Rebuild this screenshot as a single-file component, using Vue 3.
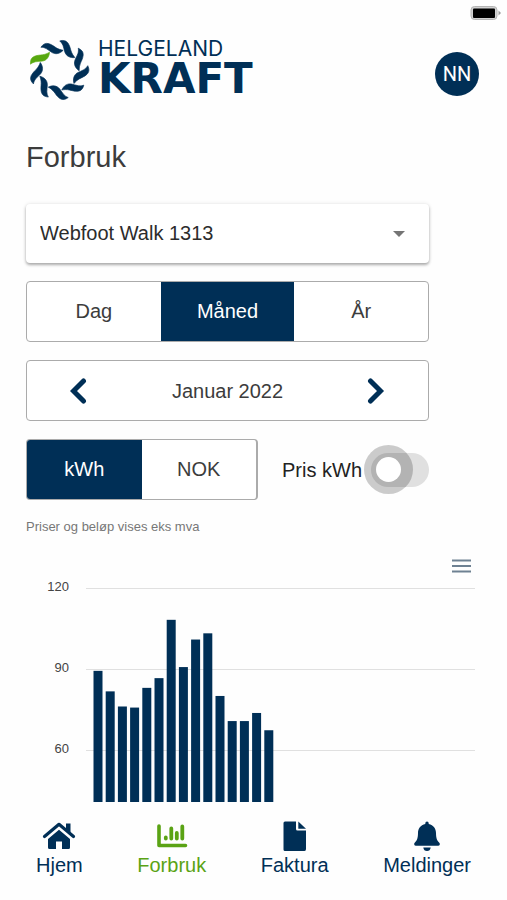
<script setup>
import { ref } from 'vue'

const periods = ['Dag', 'Måned', 'År']
const period = ref('Måned')
const units = ['kWh', 'NOK']
const unit = ref('kWh')
const showPrice = ref(false)
const meter = ref('Webfoot Walk 1313')

const petals = Array.from({ length: 9 }, (_, i) => i * 40)

const usage = [89.5, 81.9, 76.3, 75.9, 83.2, 86.8, 108.4, 90.9, 101.1, 103.4, 80.2, 70.9, 70.9, 73.9, 67.5]
const ticks = [120, 90, 60]
const chartHeight = 227
const y = (value) => 13.5 + (120 - value) * 2.7
const bars = usage.map((value, i) => ({
  x: 67.5 + i * 12.2,
  y: y(value),
  height: chartHeight - y(value),
}))
</script>

<template>
  <div class="page">
    <div class="status">
      <svg width="31" height="16" viewBox="0 0 31 16" aria-hidden="true">
        <rect x="1" y="1.500" width="26" height="13" rx="3.5" fill="#d2d2d2" stroke="#b4b4b4" />
        <rect x="3" y="3.500" width="22" height="9.500" rx="1" fill="#000" />
        <path d="M28.500 5.500 L31 8 L28.500 10.500Z" fill="#999" />
      </svg>
    </div>

    <header class="header">
      <a class="brand" href="#">
        <svg class="mark" width="62" height="62" viewBox="-31 -31 62 62" aria-hidden="true">
          <path
            v-for="angle in petals"
            :key="angle"
            :class="angle === 0 ? 'petal-green' : 'petal'"
            :transform="`rotate(${angle})`"
            d="M-28.500 -5.800 C-28.800 -9.500 -28 -12 -25 -13.500 C-21.500 -15 -19 -14.800 -16.500 -15.200 C-14 -15.600 -12 -16.300 -9.500 -17.800 C-9.700 -13 -12.500 -9.600 -16.500 -8.900 C-19 -8.500 -21 -8.700 -23.500 -8.200 C-25.500 -7.800 -27 -7 -28.500 -5.800Z"
          />
        </svg>
        <span class="brand-text">
          <span class="brand-top">HELGELAND</span>
          <span class="brand-bottom">KRAFT</span>
        </span>
      </a>
      <button class="avatar" type="button">NN</button>
    </header>

    <main class="main">
      <h1 class="title">Forbruk</h1>

      <div class="controls">
        <div class="select-wrap">
          <select v-model="meter" class="select" aria-label="Målepunkt">
            <option>Webfoot Walk 1313</option>
          </select>
          <svg class="caret" width="12" height="6" viewBox="0 0 12 6" aria-hidden="true">
            <path d="M0 0H12L6 6Z" fill="#757575" />
          </svg>
        </div>

        <div class="segments">
          <button
            v-for="item in periods"
            :key="item"
            type="button"
            class="segment"
            :class="{ active: item === period }"
            @click="period = item"
          >{{ item }}</button>
        </div>

        <div class="date">
          <button class="arrow" type="button" aria-label="Forrige">
            <svg width="18" height="26" viewBox="0 0 18 26"><path d="M13.500 3 L3.500 13 L13.500 23" /></svg>
          </button>
          <span>Januar 2022</span>
          <button class="arrow" type="button" aria-label="Neste">
            <svg width="18" height="26" viewBox="0 0 18 26"><path d="M3.500 3 L13.500 13 L3.500 23" /></svg>
          </button>
        </div>

        <div class="unit-row">
          <div class="segments units">
            <button
              v-for="item in units"
              :key="item"
              type="button"
              class="segment"
              :class="{ active: item === unit }"
              @click="unit = item"
            >{{ item }}</button>
          </div>
          <label class="switch-label" for="price">Pris kWh</label>
          <input id="price" v-model="showPrice" class="switch" type="checkbox" />
        </div>
      </div>

      <p class="note">Priser og beløp vises eks mva</p>

      <div class="chart-tools">
        <button class="menu" type="button" aria-label="Meny">
          <svg width="19" height="14" viewBox="0 0 19 14">
            <path d="M0 1.500H19M0 7H19M0 12.500H19" stroke="#6e8192" stroke-width="2" />
          </svg>
        </button>
      </div>

      <svg class="chart" :viewBox="`0 0 449 ${chartHeight}`">
        <g v-for="tick in ticks" :key="tick">
          <line x1="60" x2="449" :y1="y(tick)" :y2="y(tick)" class="grid" />
          <text x="43" :y="y(tick) + 2" class="tick">{{ tick }}</text>
        </g>
        <rect
          v-for="(bar, i) in bars"
          :key="i"
          class="bar"
          :x="bar.x"
          :y="bar.y"
          width="9"
          :height="bar.height"
        />
      </svg>
    </main>

    <nav class="nav">
      <a class="nav-item" href="#">
        <svg width="34" height="30" viewBox="0 0 34 30">
          <path d="M2.500 15.500 L17 3.300 L31.500 15.500" fill="none" stroke="currentColor" stroke-width="3.200" stroke-linecap="round" stroke-linejoin="round" />
          <path d="M24 2.500 H28.500 V13 L24 9.200Z" fill="currentColor" />
          <path d="M17 8.700 L28 18 V26.500 Q28 28 26.500 28 H20 V20.500 H14 V28 H7.500 Q6 28 6 26.500 V18Z" fill="currentColor" />
        </svg>
        <span>Hjem</span>
      </a>
      <a class="nav-item current" href="#">
        <svg width="34" height="30" viewBox="0 0 34 30" fill="none" stroke="currentColor" stroke-linecap="round" stroke-linejoin="round">
          <path d="M4 5 V24.500 H30.500" stroke-width="3.600" />
          <path d="M10.800 16.500 V17.500 M16.300 7.500 V17.500 M21.800 12 V17.500 M27.300 5.500 V17.500" stroke-width="3.800" />
        </svg>
        <span>Forbruk</span>
      </a>
      <a class="nav-item" href="#">
        <svg width="34" height="30" viewBox="0 0 34 30" fill="currentColor">
          <path d="M7 0.500 H18 V8 Q18 9.500 19.500 9.500 H28 V28 Q28 30 26.500 30 H7 Q5.500 30 5.500 28.500 V2 Q5.500 0.500 7 0.500Z" />
          <path d="M20.300 0.500 L28 7.700 H20.300Z" />
        </svg>
        <span>Faktura</span>
      </a>
      <a class="nav-item" href="#">
        <svg width="34" height="30" viewBox="0 0 34 30" fill="currentColor">
          <path d="M17 0.500 Q18.700 0.500 18.700 2.200 V3 C23.500 4 26 7.800 26 12 C26 18 27.500 20 29.300 21.800 Q30 22.600 29.800 23.500 Q29.500 24.700 28 24.700 H6 Q4.500 24.700 4.200 23.500 Q4 22.600 4.700 21.800 C6.500 20 8 18 8 12 C8 7.800 10.500 4 15.300 3 V2.200 Q15.300 0.500 17 0.500Z" />
          <path d="M13.300 26.500 H20.700 Q20.200 30 17 30 Q13.800 30 13.300 26.500Z" />
        </svg>
        <span>Meldinger</span>
      </a>
    </nav>
  </div>
</template>

<style>
body {
  margin: 0;
  background: #fefefe;
}
</style>

<style scoped>
.page {
  --navy: #002f56;
  --line: #ababab;
  min-height: 100vh;
  box-sizing: border-box;
  display: flex;
  flex-direction: column;
  font-family: "Liberation Sans", Arial, sans-serif;
  font-size: 20px;
  line-height: 24px;
  color: #3c3c3c;
}

.page button,
.page select {
  font: inherit;
  color: inherit;
  background: none;
  border: 0;
  border-radius: 0;
  margin: 0;
  padding: 0;
  cursor: pointer;
}

.page svg {
  display: block;
}

.status {
  display: flex;
  justify-content: flex-end;
  padding: 5px 6px 0 0;
}

.header {
  display: flex;
  align-items: center;
  justify-content: space-between;
  padding: 18px 28px 0;
}

.brand {
  display: flex;
  align-items: center;
  gap: 8px;
  color: var(--navy);
  text-decoration: none;
}

.petal {
  fill: var(--navy);
  stroke: var(--navy);
  stroke-width: 0.6;
  stroke-linejoin: round;
}

.petal-green {
  fill: #57a80f;
  stroke: #57a80f;
  stroke-width: 0.6;
  stroke-linejoin: round;
}

.brand-text {
  display: flex;
  flex-direction: column;
}

.brand-top {
  font: 400 21px/18px Inter, sans-serif;
}

.brand-bottom {
  font: bold 42px/42px "DejaVu Sans", sans-serif;
}

.page .avatar {
  width: 44px;
  height: 44px;
  margin-top: 8px;
  border-radius: 50%;
  background: var(--navy);
  color: #fff;
  font-family: Roboto, sans-serif;
}

.main {
  padding: 38px 32px 0 26px;
}

.title {
  margin: 0 0 29px;
  font-size: 29px;
  line-height: 36px;
  font-weight: 400;
}

.controls {
  display: flex;
  flex-direction: column;
  gap: 18px;
  margin-right: 46px;
}

.select-wrap {
  display: grid;
  align-items: center;
  border-radius: 4px;
  background: #fff;
  box-shadow: 0 2px 3px rgba(0, 0, 0, 0.3), 0 0 4px rgba(0, 0, 0, 0.1);
}

.page .select {
  grid-area: 1 / 1;
  appearance: none;
  width: 100%;
  height: 59px;
  padding: 0 48px 2px 14px;
  color: #2c2c2c;
}

.caret {
  grid-area: 1 / 1;
  justify-self: end;
  margin-right: 24px;
  pointer-events: none;
}

.segments,
.date {
  display: flex;
  box-sizing: border-box;
  height: 61px;
  border: 1px solid var(--line);
  border-radius: 4px;
  overflow: hidden;
  background: #fff;
}

.page .segment {
  flex: 1;
  padding-bottom: 2px;
}

.page .segment.active {
  background: var(--navy);
  color: #fff;
}

.date {
  align-items: center;
  justify-content: space-between;
  padding: 0 43px;
}

.arrow path {
  fill: none;
  stroke: var(--navy);
  stroke-width: 5;
  stroke-linecap: round;
}

.unit-row {
  display: flex;
  align-items: center;
}

.units {
  flex: 0 0 232px;
  border-right-width: 2px;
}

.switch-label {
  margin-left: 24px;
  color: #222;
  white-space: nowrap;
}

.switch {
  appearance: none;
  display: flex;
  align-items: center;
  box-sizing: border-box;
  width: 58px;
  height: 34px;
  margin: 0 0 0 auto;
  padding: 0 5px;
  border-radius: 17px;
  background: #e0e0e0;
  cursor: pointer;
}

.switch::before {
  content: "";
  width: 25px;
  height: 25px;
  border-radius: 50%;
  background: #fff;
  box-shadow: 0 0 0 12px rgba(0, 0, 0, 0.2);
}

.switch:checked {
  justify-content: flex-end;
}

.note {
  margin: 19px 0 0;
  font-size: 13px;
  line-height: 16px;
  color: #777;
}

.chart-tools {
  display: flex;
  justify-content: flex-end;
  padding: 24px 4px 0 0;
}

.chart {
  width: 100%;
  height: auto;
  margin-top: 2px;
}

.grid {
  stroke: #e0e0e0;
}

.tick {
  font-size: 13px;
  fill: #444;
  text-anchor: end;
}

.bar {
  fill: var(--navy);
}

.nav {
  display: flex;
  justify-content: space-between;
  padding: 19px 36px 0;
}

.nav-item {
  display: flex;
  flex-direction: column;
  align-items: center;
  gap: 2px;
  color: var(--navy);
  text-decoration: none;
}

.nav-item.current {
  color: #5aa314;
}
</style>
